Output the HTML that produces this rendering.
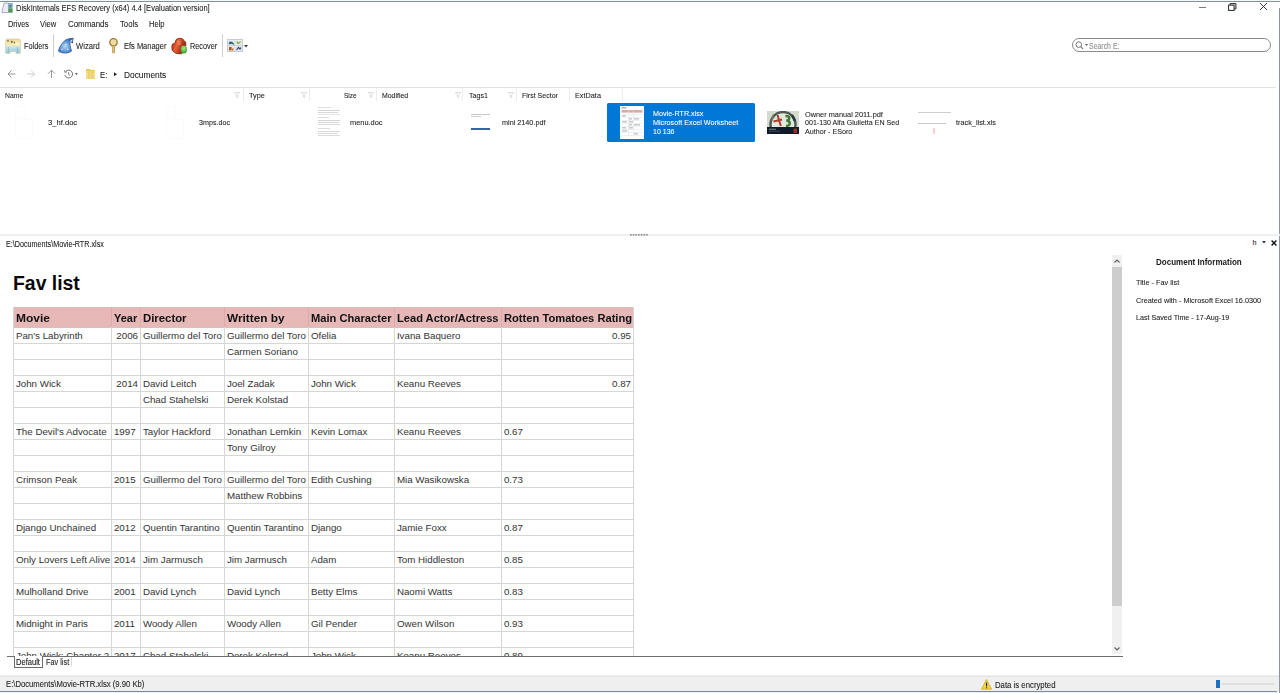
<!DOCTYPE html>
<html><head><meta charset="utf-8"><style>
html,body{margin:0;padding:0;background:#fff;width:1280px;height:693px;overflow:hidden;position:relative;font-family:"Liberation Sans",sans-serif}
.t{position:absolute;white-space:nowrap;line-height:1}
.s{-webkit-text-stroke:0.08px currentColor}
.r{position:absolute}
svg.r{overflow:visible}
</style></head><body>
<div class="r" style="left:0px;top:0px;width:1280px;height:1px;background:#f2f9fa"></div>
<div class="r" style="left:0px;top:1px;width:1280px;height:1px;background:#838e97"></div>
<div class="r" style="left:1279px;top:8px;width:1px;height:685px;background:#8b97a3"></div>
<svg class="r" style="left:1px;top:2px" width="12" height="11" viewBox="0 0 12 11">
<path d="M3 1 H7.5 V10.5 H0.8 Z" fill="#eceaf4" stroke="#8e94a8" stroke-width="0.7"/>
<path d="M7.5 1 H11.5 V10.5 H7.5Z" fill="#6fa98a"/>
<path d="M7.5 1 H11.5 V5 H7.5Z" fill="#86aed0"/>
<circle cx="9.3" cy="4" r="1.1" fill="#3f6f8a"/>
<path d="M7.5 7 H11.5 V10.5 H7.5Z" fill="#4f9a5a"/>
</svg>
<div class="t s" style="left:15.50px;top:4.00px;font-size:8.7px;color:#1c1c1c;transform:scaleX(0.8665);transform-origin:0 0;">DiskInternals EFS Recovery (x64) 4.4 [Evaluation version]</div>
<div class="r" style="left:1199px;top:7px;width:7px;height:1px;background:#777"></div>
<svg class="r" style="left:1228px;top:3px" width="9" height="8" viewBox="0 0 9 8">
<rect x="0.6" y="2.1" width="5.5" height="5.3" fill="none" stroke="#222" stroke-width="1"/>
<path d="M2.2 2 V0.6 H7.9 V5.9 H6.2" fill="none" stroke="#222" stroke-width="1"/>
</svg>
<svg class="r" style="left:1259px;top:2px" width="9" height="9" viewBox="0 0 9 9">
<path d="M1 1 L8 8 M8 1 L1 8" stroke="#222" stroke-width="0.9"/>
</svg>
<div class="t s" style="left:8.10px;top:20.00px;font-size:8.8px;color:#1c1c1c;transform:scaleX(0.8422);transform-origin:0 0;">Drives</div>
<div class="t s" style="left:40.25px;top:20.00px;font-size:8.8px;color:#1c1c1c;transform:scaleX(0.8591);transform-origin:0 0;">View</div>
<div class="t s" style="left:67.75px;top:20.00px;font-size:8.8px;color:#1c1c1c;transform:scaleX(0.9001);transform-origin:0 0;">Commands</div>
<div class="t s" style="left:119.75px;top:20.00px;font-size:8.8px;color:#1c1c1c;transform:scaleX(0.8762);transform-origin:0 0;">Tools</div>
<div class="t s" style="left:148.50px;top:20.00px;font-size:8.8px;color:#1c1c1c;transform:scaleX(0.8564);transform-origin:0 0;">Help</div>
<div class="r" style="left:53px;top:34px;width:1px;height:23px;background:#d0d0d0"></div>
<div class="r" style="left:222px;top:34px;width:1px;height:23px;background:#d0d0d0"></div>
<div class="t s" style="left:23.75px;top:42.00px;font-size:8.9px;color:#1c1c1c;transform:scaleX(0.8222);transform-origin:0 0;">Folders</div>
<div class="t s" style="left:76.25px;top:42.00px;font-size:8.9px;color:#1c1c1c;transform:scaleX(0.8577);transform-origin:0 0;">Wizard</div>
<div class="t s" style="left:123.75px;top:42.00px;font-size:8.9px;color:#1c1c1c;transform:scaleX(0.8423);transform-origin:0 0;">Efs Manager</div>
<div class="t s" style="left:190.25px;top:42.00px;font-size:8.9px;color:#1c1c1c;transform:scaleX(0.8222);transform-origin:0 0;">Recover</div>
<svg class="r" style="left:5px;top:38px" width="16" height="16" viewBox="0 0 16 16">
<defs><linearGradient id="fg" x1="0" y1="0" x2="0" y2="1"><stop offset="0" stop-color="#eedb9c"/><stop offset="0.42" stop-color="#f4eeb6"/><stop offset="0.58" stop-color="#c2e2ec"/><stop offset="1" stop-color="#94c6d6"/></linearGradient></defs>
<path d="M0.6 2.5 Q0.6 1 2.1 1 H13.9 Q15.4 1 15.4 2.5 V14.2 Q15.4 15.6 14 15.6 H11 V13.6 H5 V15.6 H2 Q0.6 15.6 0.6 14.2Z" fill="url(#fg)" stroke="#d2c89a" stroke-width="0.6"/>
<circle cx="3" cy="2.8" r="0.9" fill="#6f6848"/><circle cx="6.8" cy="3.8" r="1.1" fill="#8a6238"/><circle cx="9.4" cy="4.6" r="0.8" fill="#6f6a48"/>
<rect x="10.5" y="4.6" width="3.4" height="2.2" fill="#faf6dc"/>
<path d="M3.5 9 V14 M12.5 9 V14" stroke="#7fb8cc" stroke-width="1.2" opacity="0.7"/>
</svg>
<svg class="r" style="left:58px;top:38px" width="16" height="16" viewBox="0 0 16 16">
<defs><radialGradient id="wg" cx="0.45" cy="0.55" r="0.6"><stop offset="0" stop-color="#b4d8f6"/><stop offset="0.6" stop-color="#5a94d4"/><stop offset="1" stop-color="#2a62ac"/></radialGradient></defs>
<path d="M0.3 13 C1.5 9 4 4.5 7.5 2.1 C10 0.6 13 0.2 15.4 0.3 C14.8 1.2 13.8 1.6 12.2 2.4 C11.6 5.5 12.2 9.5 13.6 12.9 C11 15.5 4 16 0.3 13 Z" fill="url(#wg)" stroke="#245494" stroke-width="0.7"/>
<path d="M15 0.8 L14.3 3.6" stroke="#1f4a80" stroke-width="0.8"/>
<circle cx="14.2" cy="4.3" r="1" fill="#1f4a80"/>
<circle cx="7.8" cy="6.5" r="0.8" fill="#e4f2ff"/><circle cx="9.8" cy="11.2" r="0.8" fill="#e4f2ff"/><circle cx="4" cy="11.2" r="0.7" fill="#e4f2ff"/>
</svg>
<svg class="r" style="left:108px;top:37px" width="11" height="17" viewBox="0 0 11 17">
<circle cx="5.5" cy="5.3" r="3.7" fill="#ecdca0" stroke="#9c7c3c" stroke-width="1.4"/>
<rect x="4" y="8.5" width="3" height="7.8" rx="1" fill="#c4a25c"/>
<rect x="4.8" y="9" width="1.2" height="6.5" fill="#e0c480"/>
</svg>
<svg class="r" style="left:169px;top:35px" width="22" height="22" viewBox="0 0 22 22">
<defs><linearGradient id="rg" x1="0" y1="0" x2="1" y2="0.4"><stop offset="0" stop-color="#9a1a0a"/><stop offset="0.45" stop-color="#e8643a"/><stop offset="1" stop-color="#8e1c0c"/></linearGradient>
<radialGradient id="gg" cx="0.5" cy="0.35" r="0.65"><stop offset="0" stop-color="#a6f28a"/><stop offset="1" stop-color="#2a9a26"/></radialGradient></defs>
<path d="M7.3 4.4 C9 3.2 11.5 3.2 12.7 3.5 C13.8 4 14.5 4.6 14.9 5.4 L16.5 7 C16.9 8 16.9 9.5 16.8 10.5 L16 15 L12.7 18.7 C11 18.9 9 18.8 7.3 18.4 C5.5 17.5 4 16.5 3.2 15.2 C2.8 13.5 2.8 11 3.2 9.5 C3.9 8.6 5.2 8.2 6.3 7.9 C6.4 6.5 6.6 5.2 7.3 4.4 Z" fill="url(#rg)" stroke="#8c1a0a" stroke-width="0.8"/>
<path d="M8 6 C9.5 5 11 5.2 12 6 L11.5 10 L8.5 10.5Z" fill="#f58a60" opacity="0.6"/>
<ellipse cx="14.8" cy="14.5" rx="3.2" ry="4" fill="url(#gg)"/>
</svg>
<svg class="r" style="left:227px;top:39px" width="16" height="13" viewBox="0 0 16 13">
<rect x="0.5" y="0.5" width="15" height="12" fill="#f4f6f8" stroke="#c8ccd2"/>
<path d="M0.5 6.5 H15.5 M8 0.5 V12.5" stroke="#c0c6cc" stroke-width="0.8"/>
<rect x="1.3" y="1.3" width="6.2" height="4.8" fill="#d4ecf2"/><path d="M2 3.2 H5.5 M2 5 C3 4 5 3.8 7 5.2" stroke="#2c5c64" stroke-width="1.1" fill="none"/>
<rect x="8.5" y="1.3" width="6.2" height="4.8" fill="#e6efdc"/><path d="M10 2.5 C10.5 4.8 12.5 4.8 13.5 2.5" stroke="#86a05a" stroke-width="1.3" fill="none"/>
<rect x="1.3" y="7.2" width="6.2" height="4.8" fill="#f6e4d4"/><rect x="2" y="8" width="2.6" height="3.4" fill="#a45a24"/><rect x="5" y="9.5" width="1.5" height="2" fill="#b87040"/>
<rect x="8.5" y="7.2" width="6.2" height="4.8" fill="#dfe6f0"/><path d="M9.5 11 L11.5 8.5 L13 10 L14 8.5" stroke="#3a4670" stroke-width="1.2" fill="none"/>
</svg>
<svg class="r" style="left:244px;top:45px" width="4" height="3" viewBox="0 0 4 3"><path d="M0 0H4L2 2.5Z" fill="#333"/></svg>
<div class="r" style="left:1072px;top:38px;width:199px;height:14px;border:1px solid #8a8a8a;border-radius:8px;box-sizing:border-box;background:#fff"></div>
<svg class="r" style="left:1075px;top:41px" width="10" height="9" viewBox="0 0 10 9">
<circle cx="3.8" cy="3.6" r="2.8" fill="none" stroke="#777" stroke-width="1"/>
<path d="M5.8 5.6 L8 7.8" stroke="#777" stroke-width="1.2"/>
</svg>
<svg class="r" style="left:1085px;top:44px" width="3" height="2" viewBox="0 0 3 2"><path d="M0 0H3L1.5 2Z" fill="#555"/></svg>
<div class="t s" style="left:1089.00px;top:43.00px;font-size:8.2px;color:#8c8c8c;transform:scaleX(0.8470);transform-origin:0 0;">Search E:</div>
<svg class="r" style="left:7px;top:69px" width="50" height="10" viewBox="0 0 50 10">
<path d="M1 5 H8.5 M4.5 1.5 L1 5 L4.5 8.5" fill="none" stroke="#808080" stroke-width="0.8"/>
<path d="M20 5 H27.5 M24 1.5 L27.5 5 L24 8.5" fill="none" stroke="#c0c0c0" stroke-width="0.8"/>
<path d="M44.5 9 V1.2 M41 4.7 L44.5 1.2 L48 4.7" fill="none" stroke="#808080" stroke-width="0.8"/>
</svg>
<svg class="r" style="left:63px;top:69px" width="16" height="10" viewBox="0 0 16 10">
<path d="M2.9 2.3 A3.9 3.9 0 1 1 1.9 6.2" fill="none" stroke="#5a5a5a" stroke-width="0.85"/>
<path d="M1.6 1.2 L1.9 3.3 L3.9 2.9" fill="none" stroke="#5a5a5a" stroke-width="0.8"/>
<path d="M5.6 3.2 V5.4 L7 6.3" fill="none" stroke="#5a5a5a" stroke-width="0.8"/>
<path d="M12 4.2 H14.8 L13.4 5.9Z" fill="#333"/>
</svg>
<svg class="r" style="left:85px;top:68px" width="11" height="12" viewBox="0 0 11 12">
<path d="M1 1 H5 L6 2 H10 V11 H1Z" fill="#e6c95c"/>
<path d="M1 3 H10 V11 H1Z" fill="#f3dc84"/>
<path d="M4 3 V11 M7 3 V11" stroke="#d8b848" stroke-width="0.6"/>
</svg>
<div class="t s" style="left:99.80px;top:71.00px;font-size:9.2px;color:#1a1a1a;transform:scaleX(0.8398);transform-origin:0 0;">E:</div>
<svg class="r" style="left:114px;top:72px" width="4" height="5" viewBox="0 0 4 5"><path d="M0 0.3 L3 2.3 L0 4.3Z" fill="#222"/></svg>
<div class="t s" style="left:123.75px;top:71.00px;font-size:9.2px;color:#1a1a1a;transform:scaleX(0.9091);transform-origin:0 0;">Documents</div>
<div class="r" style="left:0px;top:87px;width:1276px;height:1px;background:#e2e2e2"></div>
<div class="t s" style="left:5.20px;top:92.00px;font-size:7.2px;color:#1c1c1c;transform:scaleX(0.9476);transform-origin:0 0;">Name</div>
<div class="t s" style="left:248.60px;top:92.00px;font-size:7.2px;color:#1c1c1c;transform:scaleX(1.0122);transform-origin:0 0;">Type</div>
<div class="t s" style="left:343.75px;top:92.00px;font-size:7.2px;color:#1c1c1c;transform:scaleX(0.9067);transform-origin:0 0;">Size</div>
<div class="t s" style="left:381.90px;top:92.00px;font-size:7.2px;color:#1c1c1c;transform:scaleX(0.9627);transform-origin:0 0;">Modified</div>
<div class="t s" style="left:468.75px;top:92.00px;font-size:7.2px;color:#1c1c1c;transform:scaleX(0.9941);transform-origin:0 0;">Tags1</div>
<div class="t s" style="left:521.90px;top:92.00px;font-size:7.2px;color:#1c1c1c;transform:scaleX(0.9781);transform-origin:0 0;">First Sector</div>
<div class="t s" style="left:575.00px;top:92.00px;font-size:7.2px;color:#1c1c1c;transform:scaleX(1.0152);transform-origin:0 0;">ExtData</div>
<div class="r" style="left:243px;top:88px;width:1px;height:13px;background:#ececec"></div>
<div class="r" style="left:309px;top:88px;width:1px;height:13px;background:#ececec"></div>
<div class="r" style="left:376px;top:88px;width:1px;height:13px;background:#ececec"></div>
<div class="r" style="left:462px;top:88px;width:1px;height:13px;background:#ececec"></div>
<div class="r" style="left:516px;top:88px;width:1px;height:13px;background:#ececec"></div>
<div class="r" style="left:569px;top:88px;width:1px;height:13px;background:#ececec"></div>
<div class="r" style="left:622px;top:88px;width:1px;height:13px;background:#ececec"></div>
<svg class="r" style="left:234px;top:92px" width="6" height="6" viewBox="0 0 6 6"><path d="M0.3 0.5 H5.7 L3.6 3 V5.7 L2.4 5 V3Z" fill="none" stroke="#d6d6d6" stroke-width="0.8"/></svg>
<svg class="r" style="left:301px;top:92px" width="6" height="6" viewBox="0 0 6 6"><path d="M0.3 0.5 H5.7 L3.6 3 V5.7 L2.4 5 V3Z" fill="none" stroke="#d6d6d6" stroke-width="0.8"/></svg>
<svg class="r" style="left:368px;top:92px" width="6" height="6" viewBox="0 0 6 6"><path d="M0.3 0.5 H5.7 L3.6 3 V5.7 L2.4 5 V3Z" fill="none" stroke="#d6d6d6" stroke-width="0.8"/></svg>
<svg class="r" style="left:455px;top:92px" width="6" height="6" viewBox="0 0 6 6"><path d="M0.3 0.5 H5.7 L3.6 3 V5.7 L2.4 5 V3Z" fill="none" stroke="#d6d6d6" stroke-width="0.8"/></svg>
<svg class="r" style="left:508px;top:92px" width="6" height="6" viewBox="0 0 6 6"><path d="M0.3 0.5 H5.7 L3.6 3 V5.7 L2.4 5 V3Z" fill="none" stroke="#d6d6d6" stroke-width="0.8"/></svg>
<div class="t s" style="left:47.50px;top:119.00px;font-size:7.9px;color:#1c1c1c;transform:scaleX(0.9634);transform-origin:0 0;">3_hf.doc</div>
<div class="t s" style="left:199.00px;top:119.00px;font-size:7.9px;color:#1c1c1c;transform:scaleX(0.9051);transform-origin:0 0;">3mps.doc</div>
<div class="t s" style="left:350.00px;top:119.00px;font-size:7.9px;color:#1c1c1c;transform:scaleX(0.9367);transform-origin:0 0;">menu.doc</div>
<div class="t s" style="left:502.00px;top:119.00px;font-size:7.9px;color:#1c1c1c;transform:scaleX(0.9171);transform-origin:0 0;">mini 2140.pdf</div>
<div class="r" style="left:15px;top:106px;width:10px;height:12px;border:1px solid #fbfbfb;box-sizing:border-box"></div>
<div class="r" style="left:15px;top:119px;width:18px;height:20px;border:1px solid #fbfbfb;box-sizing:border-box"></div>
<div class="r" style="left:166px;top:106px;width:10px;height:12px;border:1px solid #fbfbfb;box-sizing:border-box"></div>
<div class="r" style="left:166px;top:119px;width:18px;height:20px;border:1px solid #fbfbfb;box-sizing:border-box"></div>
<svg class="r" style="left:318px;top:106px" width="23" height="31" viewBox="0 0 23 31"><rect x="0" y="1" width="13" height="1" fill="#dedede"/><rect x="0" y="4" width="22" height="1" fill="#d4d4d4"/><rect x="0" y="6" width="20" height="1" fill="#d8d8d8"/><rect x="0" y="8" width="22" height="1" fill="#e4e4e4"/><rect x="0" y="11" width="11" height="1" fill="#dcdcdc"/><rect x="0" y="14" width="22" height="1" fill="#d4d4d4"/><rect x="0" y="16" width="21" height="1" fill="#d8d8d8"/><rect x="0" y="18" width="22" height="1" fill="#dcdcdc"/><rect x="0" y="22" width="12" height="1" fill="#dcdcdc"/><rect x="0" y="25" width="22" height="1" fill="#d6d6d6"/><rect x="0" y="27" width="20" height="1" fill="#dadada"/><rect x="0" y="29" width="22" height="1" fill="#dcdcdc"/></svg>
<div class="r" style="left:471px;top:114px;width:19px;height:1px;background:#c8c8c8"></div>
<div class="r" style="left:471px;top:116px;width:10px;height:1px;background:#cfcfcf"></div>
<div class="r" style="left:471px;top:128px;width:19px;height:2px;background:#3563b0"></div>
<div class="r" style="left:607px;top:103px;width:148px;height:39px;background:#0078d7;border-radius:1.5px"></div>
<div class="r" style="left:620px;top:106px;width:24px;height:33px;background:#fcfeff"></div>
<svg class="r" style="left:620px;top:106px" width="24" height="33" viewBox="0 0 24 33"><rect x="1.5" y="1.5" width="5" height="0.8" fill="#777"/><rect x="1.5" y="4" width="21" height="2.6" fill="#d9a9a8"/><rect x="1.5" y="8" width="21" height="0.5" fill="#e2e2e2"/><rect x="1.5" y="11" width="21" height="0.5" fill="#e2e2e2"/><rect x="1.5" y="14" width="21" height="0.5" fill="#e2e2e2"/><rect x="1.5" y="17" width="21" height="0.5" fill="#e2e2e2"/><rect x="1.5" y="20" width="21" height="0.5" fill="#e2e2e2"/><rect x="1.5" y="23" width="21" height="0.5" fill="#e2e2e2"/><rect x="1.5" y="26" width="21" height="0.5" fill="#e2e2e2"/><rect x="1.5" y="29" width="21" height="0.5" fill="#e2e2e2"/><rect x="2" y="9.5" width="4" height="0.8" fill="#9a9a9a"/><rect x="9" y="12.5" width="3" height="0.8" fill="#9a9a9a"/><rect x="14" y="12.5" width="5" height="0.8" fill="#9a9a9a"/><rect x="2" y="15.5" width="5" height="0.8" fill="#9a9a9a"/><rect x="9" y="15.5" width="4" height="0.8" fill="#9a9a9a"/><rect x="9" y="18.5" width="3" height="0.8" fill="#9a9a9a"/><rect x="14" y="18.5" width="6" height="0.8" fill="#9a9a9a"/><rect x="2" y="21.5" width="4" height="0.8" fill="#9a9a9a"/><rect x="9" y="21.5" width="4" height="0.8" fill="#9a9a9a"/><rect x="2" y="24.5" width="5" height="0.8" fill="#9a9a9a"/><rect x="14" y="27.5" width="4" height="0.8" fill="#9a9a9a"/><rect x="8" y="4" width="0.5" height="27" fill="#e4e4e4"/><rect x="13" y="4" width="0.5" height="27" fill="#e4e4e4"/></svg>
<div class="t s" style="left:652.80px;top:110.00px;font-size:7.9px;color:#fff;transform:scaleX(0.9083);transform-origin:0 0;">Movie-RTR.xlsx</div>
<div class="t s" style="left:652.80px;top:119.00px;font-size:7.9px;color:#fff;transform:scaleX(0.9136);transform-origin:0 0;">Microsoft Excel Worksheet</div>
<div class="t s" style="left:652.80px;top:128.00px;font-size:7.9px;color:#fff;transform:scaleX(0.8898);transform-origin:0 0;">10 136</div>
<div class="r" style="left:767px;top:111px;width:32px;height:23px;overflow:hidden"><svg style="filter:blur(0.35px);display:block" width="32" height="23" viewBox="0 0 32 23">
<rect width="32" height="23" fill="#d4dace"/>
<circle cx="16" cy="13.5" r="12.5" fill="#e2e8dc" stroke="#4e5a54" stroke-width="2.4"/>
<path d="M6.5 3.5 L5 9 M4 8 L7.5 6" stroke="#6a7a70" stroke-width="1.2"/>
<path d="M10.5 4 L13.8 15 M6.5 10.5 L15 8.5" stroke="#b23c30" stroke-width="2"/>
<path d="M18.5 5 C23.5 5 23.5 8.5 19.5 9.5 C24.5 10.5 23.5 15 19 15" stroke="#3f7a38" stroke-width="2.3" fill="none"/>
<path d="M25 4 L28 10" stroke="#2a3640" stroke-width="2.5"/>
<rect y="16" width="32" height="7" fill="#0f1b29"/>
<rect x="2" y="17.8" width="7" height="0.8" fill="#9aa6ac"/><rect x="2" y="19.8" width="11" height="0.8" fill="#4a5568"/>
<rect x="26.5" y="17.5" width="3.5" height="4.5" fill="#a52a2a"/>
</svg></div>
<div class="t s" style="left:804.50px;top:111.00px;font-size:7.9px;color:#1c1c1c;transform:scaleX(0.9315);transform-origin:0 0;">Owner manual 2011.pdf</div>
<div class="t s" style="left:804.50px;top:119.00px;font-size:7.9px;color:#1c1c1c;transform:scaleX(0.8975);transform-origin:0 0;">001-130 Alfa Giulietta EN Sed</div>
<div class="t s" style="left:804.50px;top:128.00px;font-size:7.9px;color:#1c1c1c;transform:scaleX(0.9071);transform-origin:0 0;">Author - ESoro</div>
<div class="r" style="left:918px;top:112px;width:33px;height:1px;background:#cfcfcf"></div>
<div class="r" style="left:918px;top:123px;width:28px;height:1px;background:#c8c8c8"></div>
<div class="r" style="left:933px;top:128px;width:2px;height:6px;background:#f2d2d2"></div>
<div class="t s" style="left:955.90px;top:119.00px;font-size:7.9px;color:#1c1c1c;transform:scaleX(0.9275);transform-origin:0 0;">track_list.xls</div>
<div class="r" style="left:0px;top:234px;width:1280px;height:2px;background:#efefef"></div>
<svg class="r" style="left:630px;top:234px" width="20" height="2" viewBox="0 0 20 2"><rect x="0.00" y="0" width="1.6" height="1.6" fill="#8a8a8a"/><rect x="2.70" y="0" width="1.6" height="1.6" fill="#8a8a8a"/><rect x="5.40" y="0" width="1.6" height="1.6" fill="#8a8a8a"/><rect x="8.10" y="0" width="1.6" height="1.6" fill="#8a8a8a"/><rect x="10.80" y="0" width="1.6" height="1.6" fill="#8a8a8a"/><rect x="13.50" y="0" width="1.6" height="1.6" fill="#8a8a8a"/><rect x="16.20" y="0" width="1.6" height="1.6" fill="#8a8a8a"/></svg>
<div class="t s" style="left:6.10px;top:241.00px;font-size:8.2px;color:#1c1c1c;transform:scaleX(0.8790);transform-origin:0 0;">E:\Documents\Movie-RTR.xlsx</div>
<div class="t s" style="left:1252.50px;top:239.00px;font-size:7.2px;color:#1c1c1c;">h</div>
<svg class="r" style="left:1262px;top:241px" width="4" height="3" viewBox="0 0 4 3"><path d="M0 0H4L2 2.5Z" fill="#333"/></svg>
<svg class="r" style="left:1271px;top:240px" width="6" height="6" viewBox="0 0 6 6"><path d="M0.6 0.6 L5.4 5.4 M5.4 0.6 L0.6 5.4" stroke="#111" stroke-width="1.4"/></svg>
<div class="r" style="left:0;top:250px;width:1110px;height:406px;overflow:hidden">
<div class="t" style="left:13.00px;top:24.00px;font-size:19.4px;color:#0a0a0a;font-weight:bold;">Fav list</div>
<div class="r" style="left:13px;top:57px;width:621px;height:21px;background:#e6b8b7"></div>
<div class="r" style="left:13px;top:57px;width:621px;height:1px;background:#dbbcbc"></div>
<div class="r" style="left:13px;top:77px;width:621px;height:1px;background:#d8c0c0"></div>
<div class="t" style="left:16.10px;top:63px;font-size:11px;color:#111;font-weight:bold;transform:scaleX(1.0906);transform-origin:0 0">Movie</div>
<div class="t" style="left:114.10px;top:63px;font-size:11px;color:#111;font-weight:bold;transform:scaleX(0.9980);transform-origin:0 0">Year</div>
<div class="t" style="left:143.10px;top:63px;font-size:11px;color:#111;font-weight:bold;transform:scaleX(1.0313);transform-origin:0 0">Director</div>
<div class="t" style="left:227.10px;top:63px;font-size:11px;color:#111;font-weight:bold;transform:scaleX(1.0732);transform-origin:0 0">Written by</div>
<div class="t" style="left:311.10px;top:63px;font-size:11px;color:#111;font-weight:bold;transform:scaleX(1.0129);transform-origin:0 0">Main Character</div>
<div class="t" style="left:397.10px;top:63px;font-size:11px;color:#111;font-weight:bold;transform:scaleX(1.0103);transform-origin:0 0">Lead Actor/Actress</div>
<div class="t" style="left:504.10px;top:63px;font-size:11px;color:#111;font-weight:bold;transform:scaleX(1.0143);transform-origin:0 0">Rotten Tomatoes Rating</div>
<div class="r" style="left:13px;top:93px;width:621px;height:1px;background:#d6d6d6"></div>
<div class="t" style="left:15.90px;top:81.00px;width:95.00px;overflow:hidden;transform:scaleX(1.0000);transform-origin:0 0;font-size:9.75px;color:#333">Pan's Labyrinth</div>
<div class="t" style="left:-62.00px;width:200px;text-align:right;transform:scaleX(1.0000);transform-origin:100% 0;top:81.00px;font-size:9.75px;color:#333">2006</div>
<div class="t" style="left:142.90px;top:81.00px;width:81.00px;overflow:hidden;transform:scaleX(1.0000);transform-origin:0 0;font-size:9.75px;color:#333">Guillermo del Toro</div>
<div class="t" style="left:226.90px;top:81.00px;width:81.00px;overflow:hidden;transform:scaleX(1.0000);transform-origin:0 0;font-size:9.75px;color:#333">Guillermo del Toro</div>
<div class="t" style="left:310.90px;top:81.00px;width:83.00px;overflow:hidden;transform:scaleX(1.0000);transform-origin:0 0;font-size:9.75px;color:#333">Ofelia</div>
<div class="t" style="left:396.90px;top:81.00px;width:104.00px;overflow:hidden;transform:scaleX(1.0000);transform-origin:0 0;font-size:9.75px;color:#333">Ivana Baquero</div>
<div class="t" style="left:431.00px;width:200px;text-align:right;transform:scaleX(1.0000);transform-origin:100% 0;top:81.00px;font-size:9.75px;color:#333">0.95</div>
<div class="r" style="left:13px;top:109px;width:621px;height:1px;background:#d6d6d6"></div>
<div class="t" style="left:226.90px;top:97.00px;width:81.00px;overflow:hidden;transform:scaleX(1.0000);transform-origin:0 0;font-size:9.75px;color:#333">Carmen Soriano</div>
<div class="r" style="left:13px;top:125px;width:621px;height:1px;background:#d6d6d6"></div>
<div class="r" style="left:13px;top:141px;width:621px;height:1px;background:#d6d6d6"></div>
<div class="t" style="left:15.90px;top:129.00px;width:95.00px;overflow:hidden;transform:scaleX(1.0000);transform-origin:0 0;font-size:9.75px;color:#333">John Wick</div>
<div class="t" style="left:-62.00px;width:200px;text-align:right;transform:scaleX(1.0000);transform-origin:100% 0;top:129.00px;font-size:9.75px;color:#333">2014</div>
<div class="t" style="left:142.90px;top:129.00px;width:81.00px;overflow:hidden;transform:scaleX(1.0000);transform-origin:0 0;font-size:9.75px;color:#333">David Leitch</div>
<div class="t" style="left:226.90px;top:129.00px;width:81.00px;overflow:hidden;transform:scaleX(1.0000);transform-origin:0 0;font-size:9.75px;color:#333">Joel Zadak</div>
<div class="t" style="left:310.90px;top:129.00px;width:83.00px;overflow:hidden;transform:scaleX(1.0000);transform-origin:0 0;font-size:9.75px;color:#333">John Wick</div>
<div class="t" style="left:396.90px;top:129.00px;width:104.00px;overflow:hidden;transform:scaleX(1.0000);transform-origin:0 0;font-size:9.75px;color:#333">Keanu Reeves</div>
<div class="t" style="left:431.00px;width:200px;text-align:right;transform:scaleX(1.0000);transform-origin:100% 0;top:129.00px;font-size:9.75px;color:#333">0.87</div>
<div class="r" style="left:13px;top:157px;width:621px;height:1px;background:#d6d6d6"></div>
<div class="t" style="left:142.90px;top:145.00px;width:81.00px;overflow:hidden;transform:scaleX(1.0000);transform-origin:0 0;font-size:9.75px;color:#333">Chad Stahelski</div>
<div class="t" style="left:226.90px;top:145.00px;width:81.00px;overflow:hidden;transform:scaleX(1.0000);transform-origin:0 0;font-size:9.75px;color:#333">Derek Kolstad</div>
<div class="r" style="left:13px;top:173px;width:621px;height:1px;background:#d6d6d6"></div>
<div class="r" style="left:13px;top:189px;width:621px;height:1px;background:#d6d6d6"></div>
<div class="t" style="left:15.90px;top:177.00px;width:95.00px;overflow:hidden;transform:scaleX(1.0000);transform-origin:0 0;font-size:9.75px;color:#333">The Devil's Advocate</div>
<div class="t" style="left:113.90px;top:177.00px;width:26.00px;overflow:hidden;transform:scaleX(1.0000);transform-origin:0 0;font-size:9.75px;color:#333">1997</div>
<div class="t" style="left:142.90px;top:177.00px;width:81.00px;overflow:hidden;transform:scaleX(1.0000);transform-origin:0 0;font-size:9.75px;color:#333">Taylor Hackford</div>
<div class="t" style="left:226.90px;top:177.00px;width:81.00px;overflow:hidden;transform:scaleX(1.0000);transform-origin:0 0;font-size:9.75px;color:#333">Jonathan Lemkin</div>
<div class="t" style="left:310.90px;top:177.00px;width:83.00px;overflow:hidden;transform:scaleX(1.0000);transform-origin:0 0;font-size:9.75px;color:#333">Kevin Lomax</div>
<div class="t" style="left:396.90px;top:177.00px;width:104.00px;overflow:hidden;transform:scaleX(1.0000);transform-origin:0 0;font-size:9.75px;color:#333">Keanu Reeves</div>
<div class="t" style="left:503.90px;top:177.00px;width:129.00px;overflow:hidden;transform:scaleX(1.0000);transform-origin:0 0;font-size:9.75px;color:#333">0.67</div>
<div class="r" style="left:13px;top:205px;width:621px;height:1px;background:#d6d6d6"></div>
<div class="t" style="left:226.90px;top:193.00px;width:81.00px;overflow:hidden;transform:scaleX(1.0000);transform-origin:0 0;font-size:9.75px;color:#333">Tony Gilroy</div>
<div class="r" style="left:13px;top:221px;width:621px;height:1px;background:#d6d6d6"></div>
<div class="r" style="left:13px;top:237px;width:621px;height:1px;background:#d6d6d6"></div>
<div class="t" style="left:15.90px;top:225.00px;width:95.00px;overflow:hidden;transform:scaleX(1.0000);transform-origin:0 0;font-size:9.75px;color:#333">Crimson Peak</div>
<div class="t" style="left:113.90px;top:225.00px;width:26.00px;overflow:hidden;transform:scaleX(1.0000);transform-origin:0 0;font-size:9.75px;color:#333">2015</div>
<div class="t" style="left:142.90px;top:225.00px;width:81.00px;overflow:hidden;transform:scaleX(1.0000);transform-origin:0 0;font-size:9.75px;color:#333">Guillermo del Toro</div>
<div class="t" style="left:226.90px;top:225.00px;width:81.00px;overflow:hidden;transform:scaleX(1.0000);transform-origin:0 0;font-size:9.75px;color:#333">Guillermo del Toro</div>
<div class="t" style="left:310.90px;top:225.00px;width:83.00px;overflow:hidden;transform:scaleX(1.0000);transform-origin:0 0;font-size:9.75px;color:#333">Edith Cushing</div>
<div class="t" style="left:396.90px;top:225.00px;width:104.00px;overflow:hidden;transform:scaleX(1.0000);transform-origin:0 0;font-size:9.75px;color:#333">Mia Wasikowska</div>
<div class="t" style="left:503.90px;top:225.00px;width:129.00px;overflow:hidden;transform:scaleX(1.0000);transform-origin:0 0;font-size:9.75px;color:#333">0.73</div>
<div class="r" style="left:13px;top:253px;width:621px;height:1px;background:#d6d6d6"></div>
<div class="t" style="left:226.90px;top:241.00px;width:81.00px;overflow:hidden;transform:scaleX(1.0000);transform-origin:0 0;font-size:9.75px;color:#333">Matthew Robbins</div>
<div class="r" style="left:13px;top:269px;width:621px;height:1px;background:#d6d6d6"></div>
<div class="r" style="left:13px;top:285px;width:621px;height:1px;background:#d6d6d6"></div>
<div class="t" style="left:15.90px;top:273.00px;width:95.00px;overflow:hidden;transform:scaleX(1.0000);transform-origin:0 0;font-size:9.75px;color:#333">Django Unchained</div>
<div class="t" style="left:113.90px;top:273.00px;width:26.00px;overflow:hidden;transform:scaleX(1.0000);transform-origin:0 0;font-size:9.75px;color:#333">2012</div>
<div class="t" style="left:142.90px;top:273.00px;width:81.00px;overflow:hidden;transform:scaleX(1.0000);transform-origin:0 0;font-size:9.75px;color:#333">Quentin Tarantino</div>
<div class="t" style="left:226.90px;top:273.00px;width:81.00px;overflow:hidden;transform:scaleX(1.0000);transform-origin:0 0;font-size:9.75px;color:#333">Quentin Tarantino</div>
<div class="t" style="left:310.90px;top:273.00px;width:83.00px;overflow:hidden;transform:scaleX(1.0000);transform-origin:0 0;font-size:9.75px;color:#333">Django</div>
<div class="t" style="left:396.90px;top:273.00px;width:104.00px;overflow:hidden;transform:scaleX(1.0000);transform-origin:0 0;font-size:9.75px;color:#333">Jamie Foxx</div>
<div class="t" style="left:503.90px;top:273.00px;width:129.00px;overflow:hidden;transform:scaleX(1.0000);transform-origin:0 0;font-size:9.75px;color:#333">0.87</div>
<div class="r" style="left:13px;top:301px;width:621px;height:1px;background:#d6d6d6"></div>
<div class="r" style="left:13px;top:317px;width:621px;height:1px;background:#d6d6d6"></div>
<div class="t" style="left:15.90px;top:305.00px;width:95.00px;overflow:hidden;transform:scaleX(1.0000);transform-origin:0 0;font-size:9.75px;color:#333">Only Lovers Left Alive</div>
<div class="t" style="left:113.90px;top:305.00px;width:26.00px;overflow:hidden;transform:scaleX(1.0000);transform-origin:0 0;font-size:9.75px;color:#333">2014</div>
<div class="t" style="left:142.90px;top:305.00px;width:81.00px;overflow:hidden;transform:scaleX(1.0000);transform-origin:0 0;font-size:9.75px;color:#333">Jim Jarmusch</div>
<div class="t" style="left:226.90px;top:305.00px;width:81.00px;overflow:hidden;transform:scaleX(1.0000);transform-origin:0 0;font-size:9.75px;color:#333">Jim Jarmusch</div>
<div class="t" style="left:310.90px;top:305.00px;width:83.00px;overflow:hidden;transform:scaleX(1.0000);transform-origin:0 0;font-size:9.75px;color:#333">Adam</div>
<div class="t" style="left:396.90px;top:305.00px;width:104.00px;overflow:hidden;transform:scaleX(1.0000);transform-origin:0 0;font-size:9.75px;color:#333">Tom Hiddleston</div>
<div class="t" style="left:503.90px;top:305.00px;width:129.00px;overflow:hidden;transform:scaleX(1.0000);transform-origin:0 0;font-size:9.75px;color:#333">0.85</div>
<div class="r" style="left:13px;top:333px;width:621px;height:1px;background:#d6d6d6"></div>
<div class="r" style="left:13px;top:349px;width:621px;height:1px;background:#d6d6d6"></div>
<div class="t" style="left:15.90px;top:337.00px;width:95.00px;overflow:hidden;transform:scaleX(1.0000);transform-origin:0 0;font-size:9.75px;color:#333">Mulholland Drive</div>
<div class="t" style="left:113.90px;top:337.00px;width:26.00px;overflow:hidden;transform:scaleX(1.0000);transform-origin:0 0;font-size:9.75px;color:#333">2001</div>
<div class="t" style="left:142.90px;top:337.00px;width:81.00px;overflow:hidden;transform:scaleX(1.0000);transform-origin:0 0;font-size:9.75px;color:#333">David Lynch</div>
<div class="t" style="left:226.90px;top:337.00px;width:81.00px;overflow:hidden;transform:scaleX(1.0000);transform-origin:0 0;font-size:9.75px;color:#333">David Lynch</div>
<div class="t" style="left:310.90px;top:337.00px;width:83.00px;overflow:hidden;transform:scaleX(1.0000);transform-origin:0 0;font-size:9.75px;color:#333">Betty Elms</div>
<div class="t" style="left:396.90px;top:337.00px;width:104.00px;overflow:hidden;transform:scaleX(1.0000);transform-origin:0 0;font-size:9.75px;color:#333">Naomi Watts</div>
<div class="t" style="left:503.90px;top:337.00px;width:129.00px;overflow:hidden;transform:scaleX(1.0000);transform-origin:0 0;font-size:9.75px;color:#333">0.83</div>
<div class="r" style="left:13px;top:365px;width:621px;height:1px;background:#d6d6d6"></div>
<div class="r" style="left:13px;top:381px;width:621px;height:1px;background:#d6d6d6"></div>
<div class="t" style="left:15.90px;top:369.00px;width:95.00px;overflow:hidden;transform:scaleX(1.0000);transform-origin:0 0;font-size:9.75px;color:#333">Midnight in Paris</div>
<div class="t" style="left:113.90px;top:369.00px;width:26.00px;overflow:hidden;transform:scaleX(1.0000);transform-origin:0 0;font-size:9.75px;color:#333">2011</div>
<div class="t" style="left:142.90px;top:369.00px;width:81.00px;overflow:hidden;transform:scaleX(1.0000);transform-origin:0 0;font-size:9.75px;color:#333">Woody Allen</div>
<div class="t" style="left:226.90px;top:369.00px;width:81.00px;overflow:hidden;transform:scaleX(1.0000);transform-origin:0 0;font-size:9.75px;color:#333">Woody Allen</div>
<div class="t" style="left:310.90px;top:369.00px;width:83.00px;overflow:hidden;transform:scaleX(1.0000);transform-origin:0 0;font-size:9.75px;color:#333">Gil Pender</div>
<div class="t" style="left:396.90px;top:369.00px;width:104.00px;overflow:hidden;transform:scaleX(1.0000);transform-origin:0 0;font-size:9.75px;color:#333">Owen Wilson</div>
<div class="t" style="left:503.90px;top:369.00px;width:129.00px;overflow:hidden;transform:scaleX(1.0000);transform-origin:0 0;font-size:9.75px;color:#333">0.93</div>
<div class="r" style="left:13px;top:397px;width:621px;height:1px;background:#d6d6d6"></div>
<div class="r" style="left:13px;top:413px;width:621px;height:1px;background:#d6d6d6"></div>
<div class="t" style="left:15.90px;top:401.00px;width:95.00px;overflow:hidden;transform:scaleX(1.0000);transform-origin:0 0;font-size:9.75px;color:#333">John Wick: Chapter 2</div>
<div class="t" style="left:113.90px;top:401.00px;width:26.00px;overflow:hidden;transform:scaleX(1.0000);transform-origin:0 0;font-size:9.75px;color:#333">2017</div>
<div class="t" style="left:142.90px;top:401.00px;width:81.00px;overflow:hidden;transform:scaleX(1.0000);transform-origin:0 0;font-size:9.75px;color:#333">Chad Stahelski</div>
<div class="t" style="left:226.90px;top:401.00px;width:81.00px;overflow:hidden;transform:scaleX(1.0000);transform-origin:0 0;font-size:9.75px;color:#333">Derek Kolstad</div>
<div class="t" style="left:310.90px;top:401.00px;width:83.00px;overflow:hidden;transform:scaleX(1.0000);transform-origin:0 0;font-size:9.75px;color:#333">John Wick</div>
<div class="t" style="left:396.90px;top:401.00px;width:104.00px;overflow:hidden;transform:scaleX(1.0000);transform-origin:0 0;font-size:9.75px;color:#333">Keanu Reeves</div>
<div class="t" style="left:503.90px;top:401.00px;width:129.00px;overflow:hidden;transform:scaleX(1.0000);transform-origin:0 0;font-size:9.75px;color:#333">0.89</div>
<div class="r" style="left:13px;top:57px;width:1px;height:360px;background:#d6d6d6"></div>
<div class="r" style="left:111px;top:57px;width:1px;height:360px;background:#d6d6d6"></div>
<div class="r" style="left:140px;top:57px;width:1px;height:360px;background:#d6d6d6"></div>
<div class="r" style="left:224px;top:57px;width:1px;height:360px;background:#d6d6d6"></div>
<div class="r" style="left:308px;top:57px;width:1px;height:360px;background:#d6d6d6"></div>
<div class="r" style="left:394px;top:57px;width:1px;height:360px;background:#d6d6d6"></div>
<div class="r" style="left:501px;top:57px;width:1px;height:360px;background:#d6d6d6"></div>
<div class="r" style="left:633px;top:57px;width:1px;height:360px;background:#d6d6d6"></div>
<div class="r" style="left:111px;top:57px;width:1px;height:20px;background:#dcaaa9"></div>
<div class="r" style="left:140px;top:57px;width:1px;height:20px;background:#dcaaa9"></div>
<div class="r" style="left:224px;top:57px;width:1px;height:20px;background:#dcaaa9"></div>
<div class="r" style="left:308px;top:57px;width:1px;height:20px;background:#dcaaa9"></div>
<div class="r" style="left:394px;top:57px;width:1px;height:20px;background:#dcaaa9"></div>
<div class="r" style="left:501px;top:57px;width:1px;height:20px;background:#dcaaa9"></div>
</div>
<div class="r" style="left:7px;top:656px;width:7px;height:1px;background:#6d6d6d"></div>
<div class="r" style="left:42px;top:656px;width:1081px;height:1px;background:#6d6d6d"></div>
<div class="r" style="left:14px;top:656px;width:29px;height:12px;border:1px solid #6d6d6d;border-top:none;box-sizing:border-box;background:#fff"></div>
<div class="t s" style="left:15.80px;top:659.00px;font-size:8.2px;color:#111;transform:scaleX(0.9237);transform-origin:0 0;">Default</div>
<div class="t s" style="left:45.80px;top:659.00px;font-size:8.2px;color:#222;transform:scaleX(0.8934);transform-origin:0 0;">Fav list</div>
<div class="r" style="left:71px;top:657px;width:1px;height:9px;background:#dcdcdc"></div>
<div class="r" style="left:1112px;top:255px;width:10px;height:399px;background:#f0f0f0"></div>
<div class="r" style="left:1112px;top:267px;width:10px;height:339px;background:#cdcdcd"></div>
<svg class="r" style="left:1114px;top:259px" width="6" height="4" viewBox="0 0 6 4"><path d="M0.5 3.5 L3 1 L5.5 3.5" fill="none" stroke="#606060" stroke-width="1.1"/></svg>
<svg class="r" style="left:1114px;top:647px" width="6" height="4" viewBox="0 0 6 4"><path d="M0.5 0.5 L3 3 L5.5 0.5" fill="none" stroke="#606060" stroke-width="1.1"/></svg>
<div class="t" style="left:1156.25px;top:258.00px;font-size:8.4px;color:#1a1a1a;font-weight:bold;transform:scaleX(0.9598);transform-origin:0 0;">Document Information</div>
<div class="t s" style="left:1136.30px;top:279.00px;font-size:7.8px;color:#1c1c1c;transform:scaleX(0.9375);transform-origin:0 0;">Title - Fav list</div>
<div class="t s" style="left:1136.30px;top:297.00px;font-size:7.8px;color:#1c1c1c;transform:scaleX(0.9346);transform-origin:0 0;">Created with - Microsoft Excel 16.0300</div>
<div class="t s" style="left:1136.30px;top:314.00px;font-size:7.8px;color:#1c1c1c;transform:scaleX(0.9186);transform-origin:0 0;">Last Saved Time - 17-Aug-19</div>
<div class="r" style="left:0px;top:675px;width:1279px;height:16px;background:#efefef"></div>
<div class="r" style="left:0px;top:676px;width:1279px;height:1px;background:#e4e4e4"></div>
<div class="r" style="left:0px;top:690px;width:1279px;height:1px;background:#ebeff5"></div>
<div class="r" style="left:0px;top:691px;width:1277px;height:1px;background:#7b8999"></div>
<div class="r" style="left:0px;top:692px;width:1279px;height:1px;background:#eef2f7"></div>
<div class="t s" style="left:6.00px;top:680.00px;font-size:8.6px;color:#1c1c1c;transform:scaleX(0.8953);transform-origin:0 0;">E:\Documents\Movie-RTR.xlsx (9.90 Kb)</div>
<svg class="r" style="left:981px;top:679px" width="11" height="11" viewBox="0 0 11 11">
<path d="M5.5 0.6 L10.5 10.2 H0.5Z" fill="#f5d63c" stroke="#c9a41a" stroke-width="0.7"/>
<rect x="5" y="3.6" width="1.1" height="3.8" fill="#222"/><rect x="5" y="8.2" width="1.1" height="1.1" fill="#222"/>
</svg>
<div class="t s" style="left:994.75px;top:681.00px;font-size:9px;color:#1c1c1c;transform:scaleX(0.8638);transform-origin:0 0;">Data is encrypted</div>
<div class="r" style="left:1216px;top:680px;width:4px;height:8px;background:#1f6fc0"></div>
<div class="r" style="left:1221px;top:683px;width:53px;height:2px;background:#dedede"></div>
</body></html>
